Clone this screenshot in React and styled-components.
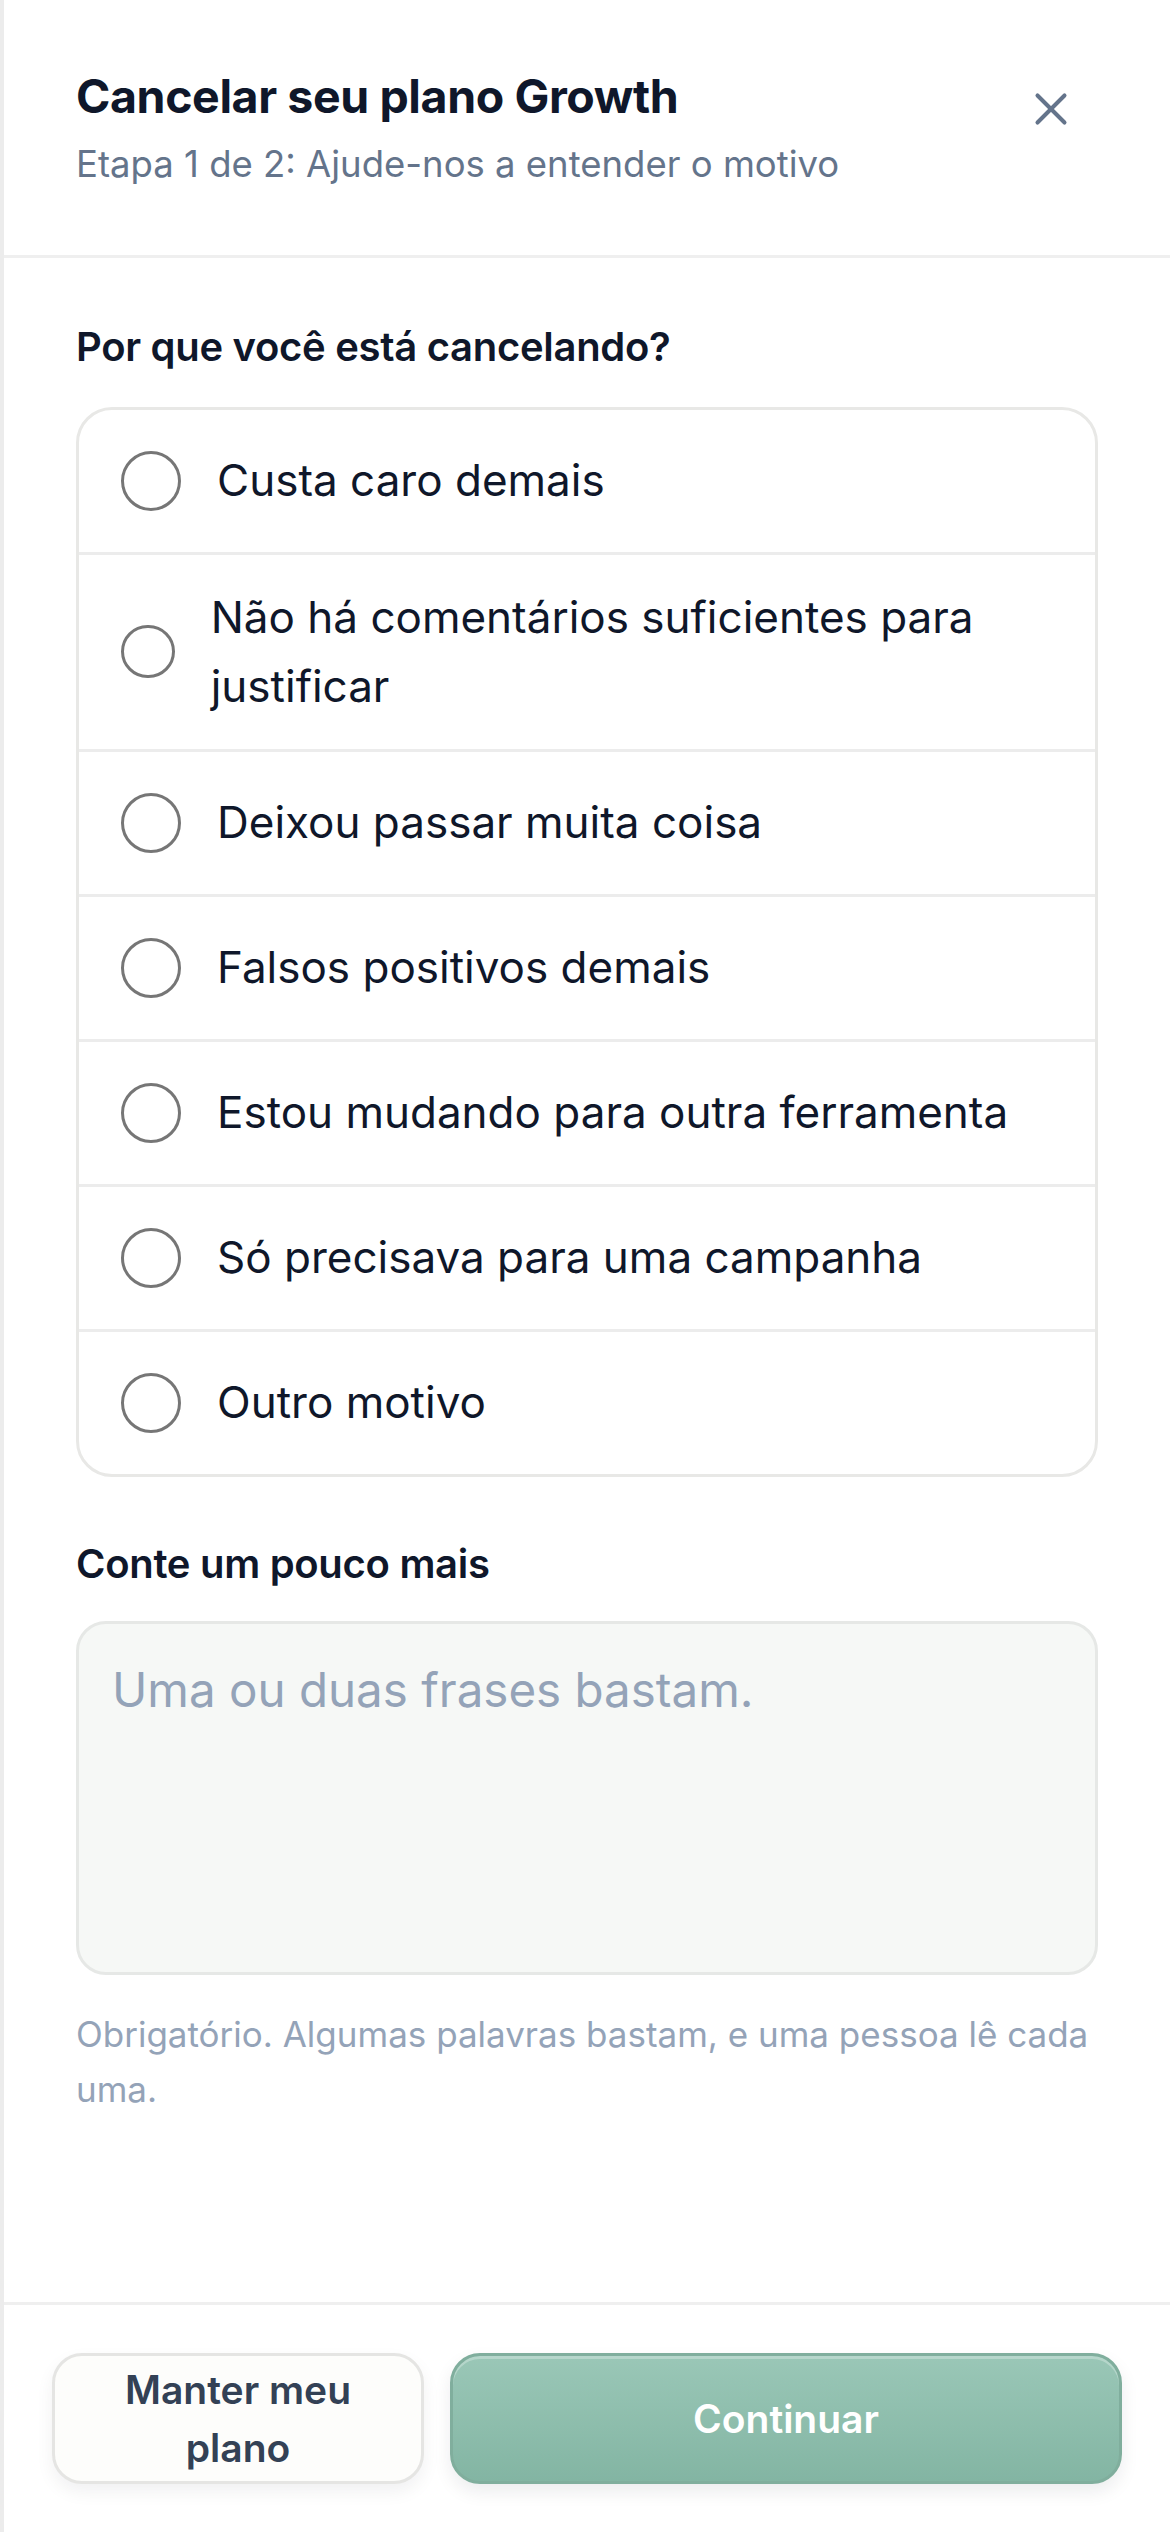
import styled, { createGlobalStyle } from "styled-components";
import { X } from "lucide-react";

const GlobalStyle = createGlobalStyle`
  html, body {
    margin: 0;
    padding: 0;
    background: #ffffff;
  }
  body {
    font-family: Inter, "Noto Sans", "Liberation Sans", sans-serif;
    -webkit-font-smoothing: antialiased;
  }
  * {
    box-sizing: border-box;
  }
`;

const Sheet = styled.div`
  min-height: 100vh;
  display: flex;
  flex-direction: column;
  border-left: 4px solid #ececec;
  background: #ffffff;
`;

const Header = styled.header`
  display: flex;
  justify-content: space-between;
  align-items: flex-start;
  padding: 69px 72px 63px;
  border-bottom: 3px solid #efefef;
`;

const TitleBlock = styled.div`
  display: flex;
  flex-direction: column;
  gap: 12px;
`;

const Title = styled.h1`
  margin: 0;
  font-size: 46.5px;
  line-height: 1.2;
  font-weight: 700;
  letter-spacing: -0.4px;
  color: #0f172a;
`;

const Subtitle = styled.p`
  margin: 0;
  font-size: 36.5px;
  line-height: 1.5;
  color: #64748b;
`;

const CloseButton = styled.button`
  width: 96px;
  height: 96px;
  margin: -8px -1px 0 0;
  padding: 0;
  border: none;
  background: transparent;
  color: #64748b;
  display: grid;
  place-items: center;
  flex-shrink: 0;
  cursor: pointer;
`;

const Main = styled.main`
  flex: 1;
  padding: 61px 72px 0;
`;

const Section = styled.section`
  margin-top: ${(p) => p.$top || 0}px;
`;

const Label = styled.h2`
  margin: 0 0 ${(p) => p.$gap}px;
  font-size: 40px;
  line-height: 1.4;
  font-weight: 600;
  letter-spacing: -0.3px;
  color: #0f172a;
`;

const OptionList = styled.div`
  border: 3px solid #e8e8e6;
  border-radius: 36px;
  overflow: hidden;
  background: #ffffff;
`;

const OptionRow = styled.label`
  display: flex;
  align-items: center;
  gap: 36px;
  min-height: 145px;
  padding: 28px 42px;
  border-top: 3px solid #ececec;
  cursor: pointer;

  &:first-child {
    border-top: 0;
    min-height: 142px;
  }
`;

const Radio = styled.input`
  appearance: none;
  -webkit-appearance: none;
  margin: 0;
  width: 60px;
  min-width: 0;
  aspect-ratio: 1;
  border: 3px solid #767676;
  border-radius: 50%;
  background: #ffffff;
`;

const OptionText = styled.span`
  font-size: 44px;
  line-height: 69px;
  color: #0f172a;
`;

const TextArea = styled.textarea`
  display: block;
  width: 100%;
  height: 354px;
  padding: 30px 33px;
  border: 3px solid #e6e8e6;
  border-radius: 30px;
  background: #f6f8f6;
  font-family: inherit;
  font-size: 47.5px;
  line-height: 1.5;
  color: #0f172a;
  resize: none;
  outline: none;

  &::placeholder {
    color: #94a3b8;
  }
`;

const Helper = styled.p`
  margin: 32px 0 0;
  font-size: 35px;
  line-height: 55px;
  color: #94a3b8;
`;

const Footer = styled.footer`
  display: grid;
  grid-template-columns: minmax(0, 1fr) minmax(0, 1.806fr);
  gap: 26px;
  padding: 48px;
  border-top: 3px solid #efefef;
`;

const Button = styled.button`
  min-height: 131px;
  padding: 0 36px;
  border-radius: 30px;
  font-family: inherit;
  font-size: 39px;
  line-height: 58px;
  font-weight: 600;
  cursor: pointer;
  border: 3px solid ${(p) => (p.$primary ? "#80ae9d" : "#e5e5e3")};
  background: ${(p) =>
    p.$primary ? "linear-gradient(#9ac7b7, #83b5a3)" : "#fdfdfb"};
  color: ${(p) => (p.$primary ? "#ffffff" : "#334155")};
  box-shadow: ${(p) =>
    p.$primary
      ? "inset 0 3px 0 rgba(255, 255, 255, 0.28), 0 8px 18px rgba(15, 23, 42, 0.08)"
      : "0 8px 18px rgba(15, 23, 42, 0.06)"};
`;

const reasons = [
  "Custa caro demais",
  "Não há comentários suficientes para justificar",
  "Deixou passar muita coisa",
  "Falsos positivos demais",
  "Estou mudando para outra ferramenta",
  "Só precisava para uma campanha",
  "Outro motivo",
];

export default function App() {
  return (
    <>
      <GlobalStyle />
      <Sheet>
        <Header>
          <TitleBlock>
            <Title>Cancelar seu plano Growth</Title>
            <Subtitle>Etapa 1 de 2: Ajude-nos a entender o motivo</Subtitle>
          </TitleBlock>
          <CloseButton aria-label="Fechar">
            <X size={54} strokeWidth={1.8} />
          </CloseButton>
        </Header>

        <Main>
          <Section>
            <Label $gap={32}>Por que você está cancelando?</Label>
            <OptionList role="radiogroup">
              {reasons.map((reason) => (
                <OptionRow key={reason}>
                  <Radio type="radio" name="reason" value={reason} />
                  <OptionText>{reason}</OptionText>
                </OptionRow>
              ))}
            </OptionList>
          </Section>

          <Section $top={59}>
            <Label $gap={29}>Conte um pouco mais</Label>
            <TextArea placeholder="Uma ou duas frases bastam." />
            <Helper>
              Obrigatório. Algumas palavras bastam, e uma pessoa lê cada uma.
            </Helper>
          </Section>
        </Main>

        <Footer>
          <Button>Manter meu plano</Button>
          <Button $primary>Continuar</Button>
        </Footer>
      </Sheet>
    </>
  );
}
